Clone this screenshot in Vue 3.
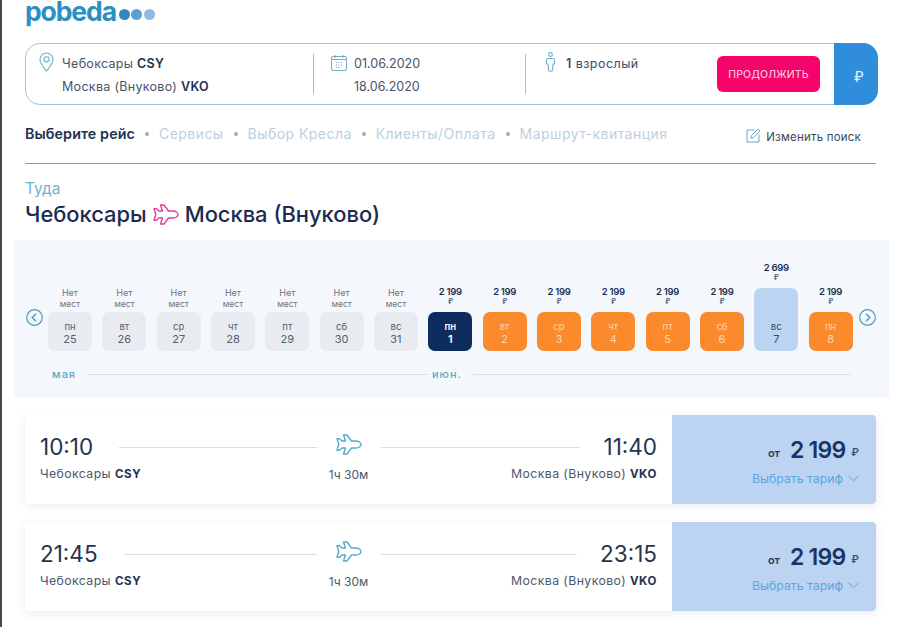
<script setup>
const emptyDays = [
  { wd: 'пн', d: 25 }, { wd: 'вт', d: 26 }, { wd: 'ср', d: 27 }, { wd: 'чт', d: 28 },
  { wd: 'пт', d: 29 }, { wd: 'сб', d: 30 }, { wd: 'вс', d: 31 }
]
const priceDays = [
  { wd: 'пн', d: 1, price: '2 199', kind: 'active' },
  { wd: 'вт', d: 2, price: '2 199', kind: 'orange' },
  { wd: 'ср', d: 3, price: '2 199', kind: 'orange' },
  { wd: 'чт', d: 4, price: '2 199', kind: 'orange' },
  { wd: 'пт', d: 5, price: '2 199', kind: 'orange' },
  { wd: 'сб', d: 6, price: '2 199', kind: 'orange' },
  { wd: 'вс', d: 7, price: '2 699', kind: 'tall' },
  { wd: 'пн', d: 8, price: '2 199', kind: 'orange' }
]
const flights = [
  { from: '10:10', to: '11:40' },
  { from: '21:45', to: '23:15' }
]
const planePath = 'M25 10.500c0-2-2.500-3.500-5-3.500h-4.500L11 1H7.500l2 6H6L3.500 4.700H1l1.800 5.800L1 16.300h2.500L6 14h3.500l-2 6H11l4.500-6H20c2.500 0 5-1.500 5-3.500z'
</script>

<template>
  <div class="page">
    <div class="logo">
      <span class="logo-text">pobeda</span>
      <i class="dot d1"></i><i class="dot d2"></i><i class="dot d3"></i>
    </div>

    <div class="search">
      <div class="sec route">
        <svg class="ic-pin" width="15" height="20" viewBox="0 0 15 20" fill="none" stroke="#6fb0cc" stroke-width="1.1">
          <path d="M7.5 19C4.5 15 1 11.500 1 7.500a6.500 6.500 0 0 1 13 0C14 11.500 10.500 15 7.500 19z" />
          <circle cx="7.500" cy="7.300" r="2.600" />
        </svg>
        <div class="lines">
          <div>Чебоксары <b>CSY</b></div>
          <div>Москва (Внуково) <b>VKO</b></div>
        </div>
      </div>
      <div class="sec dates">
        <svg class="ic-cal" width="16" height="16" viewBox="0 0 16 16" fill="none" stroke="#6fb0cc" stroke-width="1">
          <rect x="0.500" y="1.500" width="15" height="14" rx="1.500" />
          <path d="M0.500 4.500h15M4 0v3M12 0v3" />
          <path d="M5 7.500h1M7.500 7.500h1M10 7.500h1M5 10h1M7.500 10h1M10 10h1M5 12.500h1M7.500 12.500h1" stroke-width="1.200" />
        </svg>
        <div class="lines">
          <div>01.06.2020</div>
          <div>18.06.2020</div>
        </div>
      </div>
      <div class="sec pax">
        <svg class="ic-man" width="11" height="20" viewBox="0 0 11 20" fill="none" stroke="#6fb0cc" stroke-width="1.100">
          <circle cx="5.500" cy="2.500" r="1.900" />
          <path d="M3 6.500h5c1 0 1.600.7 1.600 1.700v3.300L8 12.500 7.500 18c0 .8-.8 1.300-2 1.300s-2-.5-2-1.300L3 12.500l-1.600-1V8.200c0-1 .6-1.700 1.600-1.700z" />
        </svg>
        <div class="pax-text"><span class="one">1</span> взрослый</div>
      </div>
      <button class="go" type="button">ПРОДОЛЖИТЬ</button>
      <div class="currency">₽</div>
    </div>

    <div class="steps">
      <div class="step-list">
        <b>Выберите рейс</b>
        <i></i><span>Сервисы</span>
        <i></i><span>Выбор Кресла</span>
        <i></i><span>Клиенты/Оплата</span>
        <i></i><span>Маршрут-квитанция</span>
      </div>
      <div class="change">
        <svg width="15" height="15" viewBox="0 0 15 15" fill="none" stroke="#6fa6c6" stroke-width="1">
          <path d="M8.500 2H1v12h12V6.500" />
          <path d="M5.500 7.500l-.7 2.700 2.700-.7L14 3l-2-2z" />
        </svg>
        <span>Изменить поиск</span>
      </div>
    </div>

    <div class="direction">Туда</div>
    <h1 class="title">
      Чебоксары
      <svg width="26" height="21" viewBox="0 0 26 21" fill="none" stroke="#e0409a" stroke-width="1.400" stroke-linejoin="round">
        <path :d="planePath" />
      </svg>
      Москва (Внуково)
    </h1>

    <section class="cal">
      <div class="cal-row">
        <svg class="arrow" width="17" height="17" viewBox="0 0 17 17" fill="none" stroke="#4f9fbd" stroke-width="1.200">
          <circle cx="8.500" cy="8.500" r="7.800" />
          <path d="M10 4.800L6.300 8.500 10 12.200" stroke-width="1.500" />
        </svg>
        <div class="days">
          <div v-for="day in emptyDays" :key="'e' + day.d" class="day">
            <div class="none">Нет<br /><small>мест</small></div>
            <div class="box grey">
              <span class="wd">{{ day.wd }}</span>
              <span class="num">{{ day.d }}</span>
            </div>
          </div>
          <div v-for="day in priceDays" :key="'p' + day.d" class="day">
            <div class="price">{{ day.price }}<small>₽</small></div>
            <div :class="['box', day.kind]">
              <span class="wd">{{ day.wd }}</span>
              <span class="num">{{ day.d }}</span>
            </div>
          </div>
        </div>
        <svg class="arrow next" width="17" height="17" viewBox="0 0 17 17" fill="none" stroke="#4f9fbd" stroke-width="1.200">
          <circle cx="8.500" cy="8.500" r="7.800" />
          <path d="M7 4.800l3.700 3.700L7 12.200" stroke-width="1.500" />
        </svg>
      </div>
      <div class="months">
        <span class="m-may">мая</span>
        <i class="m-line first"></i>
        <span class="m-jun">июн.</span>
        <i class="m-line"></i>
      </div>
    </section>

    <article v-for="f in flights" :key="f.from" class="flight">
      <div class="route-info">
        <div class="grid">
          <div class="side">
            <span class="time">{{ f.from }}</span>
            <i class="track"></i>
          </div>
          <svg class="plane" width="26" height="21" viewBox="0 0 26 21" fill="none" stroke="#58a9cb" stroke-width="1.400" stroke-linejoin="round">
            <path :d="planePath" />
          </svg>
          <div class="side">
            <i class="track"></i>
            <span class="time">{{ f.to }}</span>
          </div>
        </div>
        <div class="grid sub">
          <div class="city">Чебоксары <b>CSY</b></div>
          <div class="duration">1ч 30м</div>
          <div class="city right">Москва (Внуково) <b>VKO</b></div>
        </div>
      </div>
      <div class="fare">
        <div class="fare-price"><span class="from">от</span> <strong>2 199</strong> <span class="rub">₽</span></div>
        <div class="fare-link">
          Выбрать тариф
          <svg width="11" height="7" viewBox="0 0 11 7" fill="none" stroke="#5aa5e0" stroke-width="1">
            <path d="M.5.800l5 5 5-5" />
          </svg>
        </div>
      </div>
    </article>
  </div>
</template>

<style>
html, body { background: #fff; }
</style>

<style scoped>
.page {
  width: 898px;
  height: 627px;
  box-sizing: border-box;
  overflow: hidden;
  border-left: 2px solid #4a4a4a;
  padding: 0 21px 0 23px;
  background: #fff;
  color: #1e3154;
  font-family: Inter, "Noto Sans", sans-serif;
}

.logo {
  display: flex;
  align-items: center;
  height: 43px;
  padding-bottom: 21px;
  box-sizing: border-box;
}
.logo-text {
  font-size: 26.500px;
  font-weight: 700;
  line-height: 22px;
  letter-spacing: -1.100px;
  color: #2a8fc2;
}
.dot {
  width: 11px;
  height: 11px;
  margin: 7px 0 0 1.500px;
  border-radius: 50%;
}
.d1 { background: #3189c4; margin-left: 3px; }
.d2 { background: #5c9fd3; }
.d3 { background: #93bbdf; }

.search {
  display: flex;
  height: 62px;
  box-sizing: border-box;
  border: 1px solid #9fc5d8;
  border-radius: 15px;
  width: 853px;
  font-size: 12.500px;
  letter-spacing: .3px;
  color: #47556c;
}
.sec {
  position: relative;
  display: flex;
  box-sizing: border-box;
}
.sec + .sec::before {
  content: '';
  position: absolute;
  left: 0;
  top: 10px;
  bottom: 10px;
  width: 1px;
  background: #a9bcc6;
}
.route { width: 287px; padding: 8px 0 0 13px; }
.dates { width: 212px; padding: 8px 0 0 18px; }
.pax { width: 192px; padding: 8px 0 0 20px; }
.lines { line-height: 23px; }
.lines b { font-weight: 600; color: #1e3154; }
.route .lines { margin-left: 8px; }
.dates .lines { margin-left: 7px; letter-spacing: 0; }
.ic-cal { margin-top: 3px; }
.pax-text { margin: 4px 0 0 10px; letter-spacing: .45px; color: #3e4c63; }
.one { font-weight: 600; }

.go {
  align-self: center;
  width: 103px;
  height: 36px;
  padding: 0;
  border: 0;
  border-radius: 6px;
  background: #f5046b;
  color: #fbc3dc;
  font: 500 10.500px Inter, sans-serif;
  letter-spacing: .1px;
}
.currency {
  display: flex;
  align-items: center;
  justify-content: center;
  width: 44px;
  box-sizing: border-box;
  padding: 4px 0 0 6px;
  margin: -1px -1px -1px auto;
  border-radius: 0 15px 15px 0;
  background: #2f8ddb;
  color: #d8ecfa;
  font-size: 14px;
  font-weight: 500;
}

.steps {
  display: flex;
  justify-content: space-between;
  align-items: center;
  width: 851px;
  height: 59px;
  box-sizing: border-box;
  border-bottom: 1px solid #8e979e;
  padding-bottom: 1px;
}
.step-list {
  display: flex;
  align-items: center;
  font-size: 14px;
  letter-spacing: .45px;
  color: #bccfe0;
}
.step-list b { font-size: 14.300px; font-weight: 600; color: #1e3154; letter-spacing: .1px; }
.step-list i {
  width: 4px;
  height: 4px;
  margin: 0 10px;
  border-radius: 50%;
  background: #8fb1c8;
}
.change {
  display: flex;
  align-items: center;
  gap: 5px;
  margin: 6px 15px 0 0;
  font-size: 11.500px;
  letter-spacing: .2px;
  color: #3a4658;
}
.change svg { margin-top: -3px; }

.direction {
  margin-top: 16px;
  font-size: 15.500px;
  line-height: 18px;
  color: #6fb2cf;
}
.title {
  display: flex;
  align-items: center;
  gap: 6px;
  margin: 1px 0 0;
  font-size: 21.900px;
  line-height: 30px;
  font-weight: 500;
  color: #1a2c52;
}

.cal {
  width: 875px;
  height: 157px;
  box-sizing: border-box;
  margin: 11px 0 0 -11px;
  padding: 22px 12px 0;
  background: #f4f7fb;
}
.cal-row { display: flex; align-items: flex-end; }
.arrow { flex: none; margin: 0 5px 25px 0; }
.arrow.next { margin: 0 0 25px 6px; }
.days {
  display: grid;
  grid-template-columns: repeat(15, 44px);
  column-gap: 10.330px;
  align-items: end;
}
.day {
  display: flex;
  flex-direction: column;
  align-items: center;
}
.none {
  margin-bottom: 3px;
  font-size: 9px;
  line-height: 10.500px;
  text-align: center;
  color: #6d7480;
}
.none small { font-size: 8.500px; }
.price {
  display: flex;
  flex-direction: column;
  align-items: center;
  margin-bottom: 6px;
  font-size: 9.500px;
  line-height: 11px;
  font-weight: 600;
  letter-spacing: -.3px;
  color: #1e3154;
}
.price small { font-size: 7px; line-height: 9px; color: #4e5e78; }
.box {
  display: flex;
  flex-direction: column;
  align-items: center;
  justify-content: flex-end;
  box-sizing: border-box;
  height: 39px;
  width: 44px;
  padding-bottom: 6px;
  border-radius: 7px;
  line-height: 12px;
}
.wd { font-size: 9.500px; }
.num { font-size: 11px; }
.grey { background: #e8ebf0; color: #565f6d; }
.active { background: #0f2c5e; color: #fff; font-weight: 600; }
.orange { background: #fb8a2c; color: #fbd4ae; }
.tall { height: 63px; background: #bcd4f1; color: #3a4a66; }

.months {
  display: flex;
  align-items: center;
  gap: 11px;
  height: 14px;
  margin: 16px 26px 0 26px;
  font-size: 11px;
  font-weight: 500;
  letter-spacing: 1px;
  color: #5fa9c8;
}
.m-line { flex: 1; height: 1px; background: #d6e0ea; }
.m-line.first { flex: none; width: 341px; }
.m-may { width: 24px; }
.m-jun { margin-left: -7px; }

.flight {
  display: flex;
  width: 851px;
  height: 89px;
  margin-top: 18px;
  border-radius: 4px;
  background: #fff;
  box-shadow: 0 2px 10px rgba(120, 150, 190, .18);
}
.route-info {
  flex: 1;
  box-sizing: border-box;
  padding: 18px 15px 0;
}
.grid {
  display: grid;
  grid-template-columns: 1fr 26px 1fr;
  column-gap: 19px;
  align-items: center;
}
.side { display: flex; align-items: center; }
.time {
  font-size: 22.500px;
  line-height: 28px;
  color: #26344f;
}
.track {
  flex: 1;
  height: 1px;
  background: #cfe0ea;
}
.side:first-child .time { margin-right: 26px; }
.side:last-child .time { margin-left: 23px; }
.plane { margin-top: -5px; }
.sub { margin-top: 4px; }
.city {
  font-size: 12.300px;
  letter-spacing: .4px;
  color: #4b586d;
  white-space: nowrap;
}
.city b { font-size: 11.500px; letter-spacing: .6px; font-weight: 700; color: #1e3154; }
.right { text-align: right; }
.duration {
  font-size: 12px;
  white-space: nowrap;
  justify-self: center;
  color: #4b586d;
  margin-top: 2px;
}
.fare {
  display: flex;
  flex-direction: column;
  align-items: flex-end;
  box-sizing: border-box;
  width: 204px;
  padding: 19px 17px 0 0;
  border-radius: 0 4px 4px 0;
  background: #bcd4f1;
}
.fare-price {
  display: flex;
  align-items: center;
  gap: 6px;
  height: 32px;
}
.from { font-size: 11px; font-weight: 600; color: #2b3a58; margin: 5px 4px 0 0; }
.fare-price strong {
  font-size: 23px;
  font-weight: 600;
  letter-spacing: -.8px;
  color: #183566;
}
.rub { font-size: 10.500px; font-weight: 600; color: #3d4f70; margin-top: 4px; }
.fare-link {
  display: flex;
  align-items: center;
  gap: 5px;
  margin-top: 5px;
  font-size: 12.300px;
  color: #5aa5e0;
}
</style>
